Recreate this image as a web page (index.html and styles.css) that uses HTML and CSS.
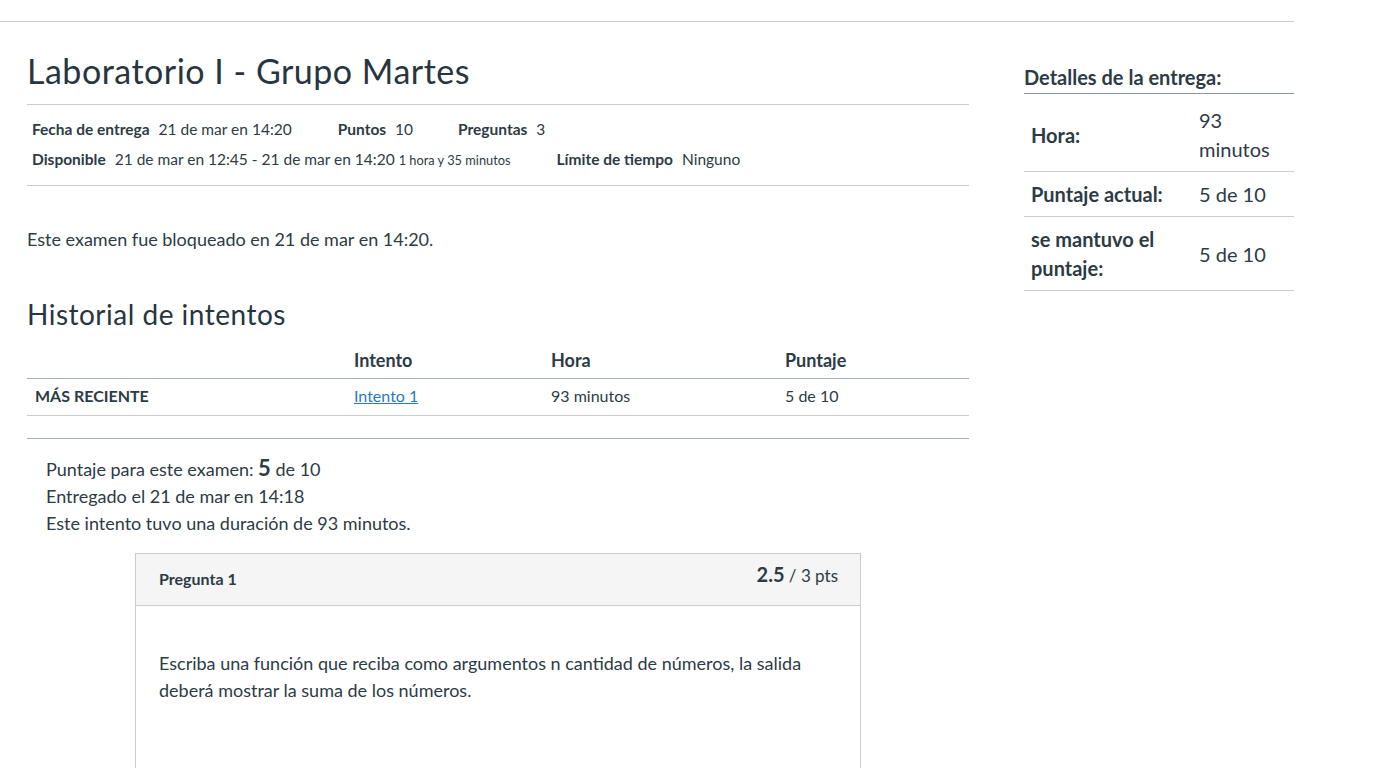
FILE: index.html
```html
<!DOCTYPE html>
<html lang="es">
<head>
<meta charset="utf-8">
<title>Laboratorio I - Grupo Martes</title>
<link rel="stylesheet" href="styles.css">
</head>
<body>
<div class="page">
  <div class="layout">
    <main class="main">
      <h1 class="title">Laboratorio I - Grupo Martes</h1>
      <div class="meta">
        <div class="meta-row">
          <span class="item"><b>Fecha de entrega</b> 21 de mar en 14:20</span>
          <span class="item"><b>Puntos</b> 10</span>
          <span class="item"><b>Preguntas</b> 3</span>
        </div>
        <div class="meta-row">
          <span class="item"><b>Disponible</b> 21 de mar en 12:45 - 21 de mar en 14:20 <small>1 hora y 35 minutos</small></span>
          <span class="item"><b>Límite de tiempo</b> Ninguno</span>
        </div>
      </div>
      <p class="locked">Este examen fue bloqueado en 21 de mar en 14:20.</p>
      <h2 class="subtitle">Historial de intentos</h2>
      <table class="history">
        <thead>
          <tr><th class="c1"></th><th class="c2">Intento</th><th class="c3">Hora</th><th class="c4">Puntaje</th></tr>
        </thead>
        <tbody>
          <tr><td class="recent">MÁS RECIENTE</td><td><a href="#">Intento 1</a></td><td>93 minutos</td><td>5 de 10</td></tr>
        </tbody>
      </table>
      <div class="divider"></div>
      <div class="summary">
        <div>Puntaje para este examen: <strong class="big">5</strong> de 10</div>
        <div>Entregado el 21 de mar en 14:18</div>
        <div>Este intento tuvo una duración de 93 minutos.</div>
      </div>
      <section class="question">
        <header class="q-head">
          <span class="q-name">Pregunta 1</span>
          <span class="q-pts"><span class="q-score">2.5</span> / 3 pts</span>
        </header>
        <div class="q-body">
          <p>Escriba una función que reciba como argumentos n cantidad de números, la salida deberá mostrar la suma de los números.</p>
        </div>
      </section>
    </main>
    <aside class="side">
      <h3 class="side-title">Detalles de la entrega:</h3>
      <table class="details">
        <tr class="first"><th>Hora:</th><td>93 minutos</td></tr>
        <tr><th>Puntaje actual:</th><td>5 de 10</td></tr>
        <tr><th>se mantuvo el puntaje:</th><td>5 de 10</td></tr>
      </table>
    </aside>
  </div>
</div>
</body>
</html>
```

FILE: styles.css
```css
* { box-sizing: border-box; }
html, body { margin: 0; padding: 0; background: #fff; }
body {
  font-family: Lato, "Noto Sans", "Liberation Sans", sans-serif;
  color: #2d3b45;
  font-size: 16px;
  line-height: 1.5;
}
.page {
  width: 1294px;
  margin-top: 21px;
  border-top: 1px solid #c7cdd1;
  height: 747px;
  overflow: hidden;
}
.layout {
  display: flex;
  gap: 55px;
  padding-left: 27px;
}
.main { width: 942px; flex: none; }
.side { width: 270px; flex: none; padding-top: 41px; }

.title {
  font-family: Lato, "Noto Sans", sans-serif;
  font-weight: 400;
  font-size: 34px;
  line-height: 40px;
  margin: 29px 0 0;
  padding-bottom: 13px;
  border-bottom: 1px solid #c7cdd1;
  letter-spacing: 0.5px;
  color: #273540;
}
.meta {
  padding: 9px 5px 10px;
  border-bottom: 1px solid #c7cdd1;
  font-size: 15.5px;
}
.meta-row { display: flex; line-height: 30px; }
.meta-row b { font-weight: 700; margin-right: 5px; }
.meta-row .item:nth-child(1) { margin-right: 46px; }
.meta-row .item:nth-child(2) { margin-right: 45px; }
.meta-row small { font-size: 12.8px; }

.locked { margin: 40px 0 0; font-size: 18px; line-height: 26px; }
.subtitle {
  font-weight: 400;
  font-size: 28px;
  line-height: 34px;
  margin: 45px 0 0;
  letter-spacing: 0.5px;
  color: #273540;
}
.history {
  width: 100%;
  border-collapse: collapse;
  margin-top: 12px;
}
.history th {
  text-align: left;
  font-weight: 700;
  font-size: 18px;
  padding: 4px 0 5px 8px;
  border-bottom: 1px solid #a5afb5;
  line-height: 26px;
}
.history td {
  font-size: 16px;
  padding: 5px 0 8px 8px;
  line-height: 23px;
  border-bottom: 1px solid #c7cdd1;
}
.history .c1 { width: 319px; }
.history .c2 { width: 197px; }
.history .c3 { width: 234px; }
.history .recent { font-weight: 700; }
.history a { color: #2b7abc; text-decoration: underline; }
.divider { height: 23px; border-bottom: 1px solid #a5afb5; }

.summary {
  padding: 15px 0 0 19px;
  line-height: 27px;
  font-size: 18px;
}
.summary .big { font-size: 22px; font-weight: 700; }

.question {
  margin: 16px 0 0 108px;
  width: 726px;
  border: 1px solid #c7cdd1;
  border-bottom: none;
}
.q-head {
  display: flex;
  justify-content: space-between;
  align-items: baseline;
  background: #f5f5f5;
  border-bottom: 1px solid #c7cdd1;
  height: 52px;
  padding: 8px 22px 0 23px;
}
.q-name { font-weight: 700; font-size: 16px; padding-top: 4px; }
.q-pts { font-size: 17px; color: #2d3b45; position: relative; top: -3px; }
.q-score { font-size: 20px; font-weight: 700; }
.q-body { padding: 44px 23px 80px; }
.q-body p { margin: 0; font-size: 18px; line-height: 27px; }

.side-title {
  font-size: 20px;
  font-weight: 700;
  line-height: 28px;
  margin: 0;
  padding-bottom: 2px;
  border-bottom: 1px solid #8b969e;
}
.details {
  width: 100%;
  border-collapse: collapse;
}
.details th, .details td {
  text-align: left;
  vertical-align: middle;
  border-bottom: 1px solid #c7cdd1;
  font-size: 20px;
  line-height: 29px;
  padding: 8px 7px 7px;
}
.details .first th, .details .first td { padding-top: 12px; }
.details th { width: 168px; font-weight: 700; }
.details td { font-weight: 400; }
```
